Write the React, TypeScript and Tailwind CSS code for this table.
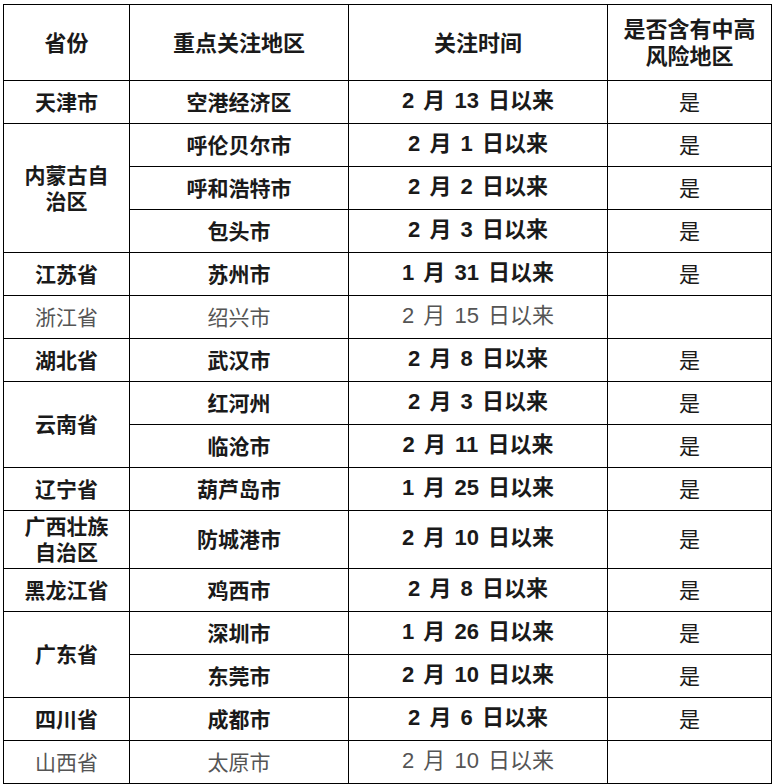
import React from "react";

type Row = {
  prov?: string[];
  span?: number;
  city: string;
  date: string;
  risk: boolean;
  bold: boolean;
  h?: number;
};

const rows: Row[] = [
  { prov: ["天津市"], span: 1, city: "空港经济区", date: "2 月 13 日以来", risk: true, bold: true },
  { prov: ["内蒙古自", "治区"], span: 3, city: "呼伦贝尔市", date: "2 月 1 日以来", risk: true, bold: true },
  { city: "呼和浩特市", date: "2 月 2 日以来", risk: true, bold: true },
  { city: "包头市", date: "2 月 3 日以来", risk: true, bold: true },
  { prov: ["江苏省"], span: 1, city: "苏州市", date: "1 月 31 日以来", risk: true, bold: true },
  { prov: ["浙江省"], span: 1, city: "绍兴市", date: "2 月 15 日以来", risk: false, bold: false },
  { prov: ["湖北省"], span: 1, city: "武汉市", date: "2 月 8 日以来", risk: true, bold: true },
  { prov: ["云南省"], span: 2, city: "红河州", date: "2 月 3 日以来", risk: true, bold: true },
  { city: "临沧市", date: "2 月 11 日以来", risk: true, bold: true },
  { prov: ["辽宁省"], span: 1, city: "葫芦岛市", date: "1 月 25 日以来", risk: true, bold: true },
  { prov: ["广西壮族", "自治区"], span: 1, city: "防城港市", date: "2 月 10 日以来", risk: true, bold: true, h: 58 },
  { prov: ["黑龙江省"], span: 1, city: "鸡西市", date: "2 月 8 日以来", risk: true, bold: true },
  { prov: ["广东省"], span: 2, city: "深圳市", date: "1 月 26 日以来", risk: true, bold: true },
  { city: "东莞市", date: "2 月 10 日以来", risk: true, bold: true },
  { prov: ["四川省"], span: 1, city: "成都市", date: "2 月 6 日以来", risk: true, bold: true },
  { prov: ["山西省"], span: 1, city: "太原市", date: "2 月 10 日以来", risk: false, bold: false },
];

const cjk = "font-['Noto_Sans_CJK_SC',sans-serif]";
const dateFont = "font-['Liberation_Sans','Noto_Sans_CJK_SC',sans-serif]";
const cell = "border border-black text-center align-middle p-0 pb-[3px]";

export default function App() {
  return (
    <div className="w-[773px] h-[784px] bg-white pt-[4px] pl-[3px]">
      <table className={`border-collapse table-fixed w-[768px] ${cjk} text-[21px] leading-[24px]`}>
        <colgroup>
          <col className="w-[126px]" />
          <col className="w-[219px]" />
          <col className="w-[259px]" />
          <col className="w-[164px]" />
        </colgroup>
        <thead>
          <tr className="h-[76px]">
            <th className={`${cell} font-bold text-[#1a1a1a] text-[22px]`}>省份</th>
            <th className={`${cell} font-bold text-[#1a1a1a] text-[22px]`}>重点关注地区</th>
            <th className={`${cell} font-bold text-[#1a1a1a] text-[22px]`}>关注时间</th>
            <th className={`${cell} font-bold text-[#1a1a1a] text-[22px]`}>
              <span className="block leading-[27px]">是否含有中高</span>
              <span className="block leading-[27px]">风险地区</span>
            </th>
          </tr>
        </thead>
        <tbody>
          {rows.map((r, i) => {
            const tone = r.bold ? "font-bold text-[#1a1a1a]" : "font-normal text-[#555]";
            return (
              <tr key={i} className={r.h ? "h-[58px]" : "h-[43px]"}>
                {r.prov !== undefined && (
                  <td rowSpan={r.span} className={`${cell} ${tone}`}>
                    {r.prov.map((p, j) => (
                      <span key={j} className="block leading-[26px]">
                        {p}
                      </span>
                    ))}
                  </td>
                )}
                <td className={`${cell} ${tone}`}>{r.city}</td>
                <td className={`${cell} ${dateFont} text-[22px] [word-spacing:3px] ${tone}`}>{r.date}</td>
                <td className={`${cell} font-normal text-[#1a1a1a]`}>{r.risk ? "是" : ""}</td>
              </tr>
            );
          })}
        </tbody>
      </table>
    </div>
  );
}
